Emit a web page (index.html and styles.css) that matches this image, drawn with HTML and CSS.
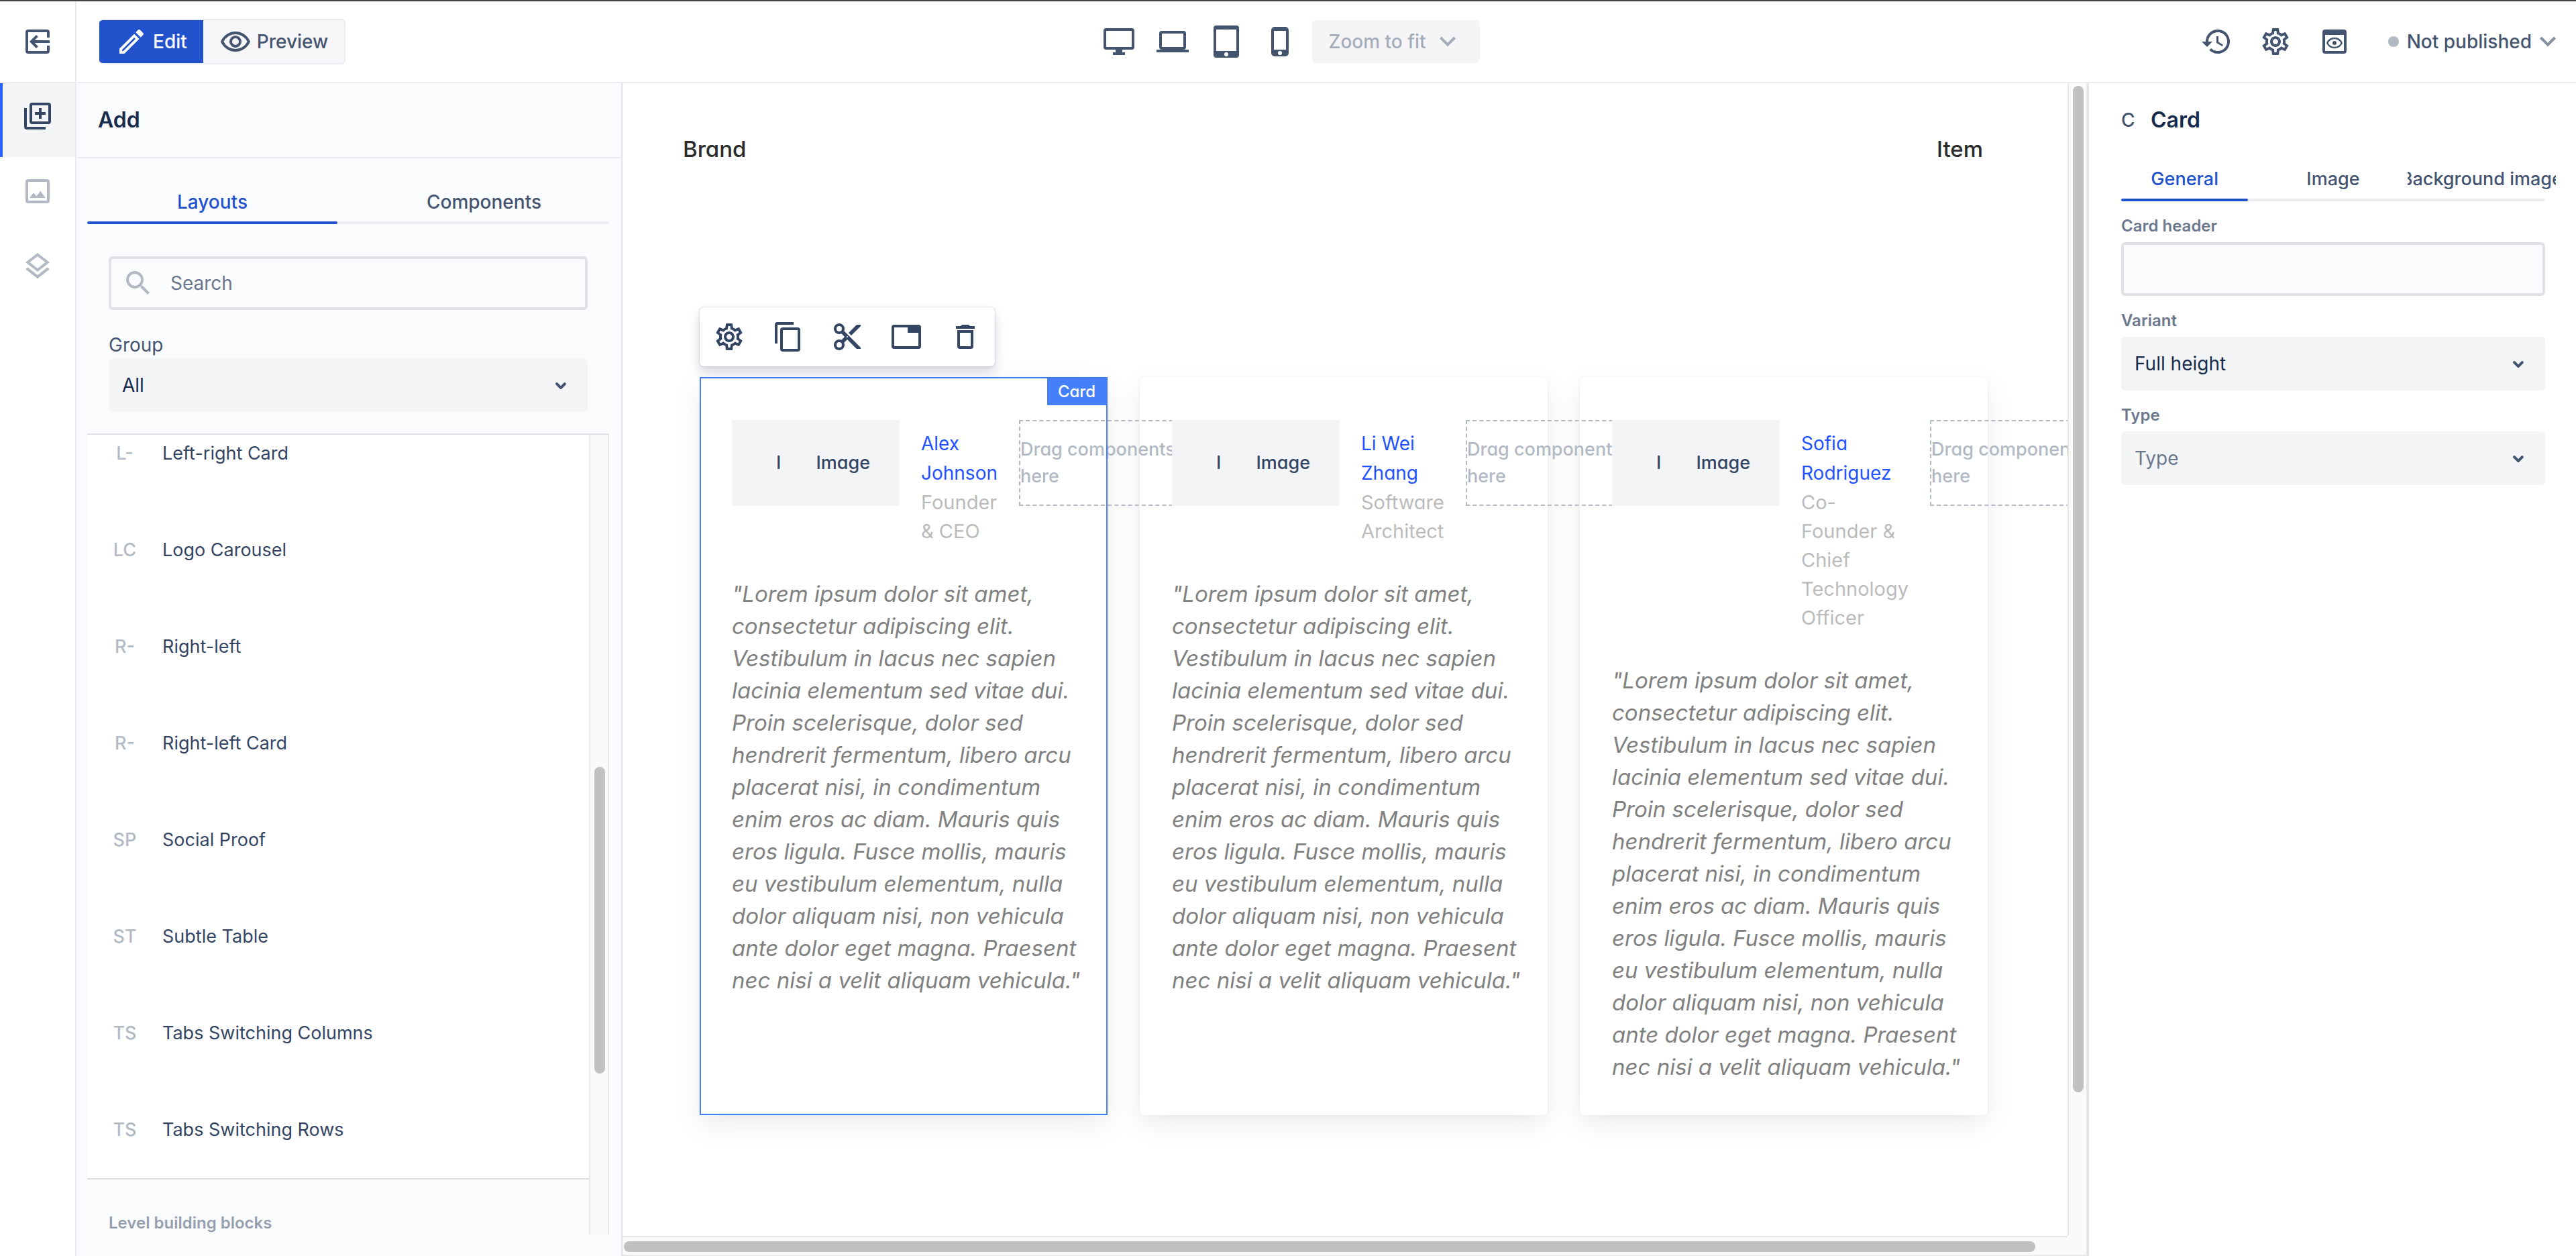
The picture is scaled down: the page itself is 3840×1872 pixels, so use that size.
FILE: index.html
```html
<!DOCTYPE html>
<html lang="en">
<head>
<meta charset="utf-8">
<title>Page editor</title>
<link rel="stylesheet" href="styles.css">
</head>
<body>
<svg class="sprite" aria-hidden="true">
  <symbol id="i-gear" viewBox="0 0 24 24"><path d="M19.43 12.98c.04-.32.07-.64.07-.98s-.03-.66-.07-.98l2.11-1.65c.19-.15.24-.42.12-.64l-2-3.46c-.09-.16-.26-.25-.44-.25-.06 0-.12.01-.17.03l-2.49 1c-.52-.4-1.08-.73-1.69-.98l-.38-2.65C14.46 2.18 14.25 2 14 2h-4c-.25 0-.46.18-.49.42l-.38 2.65c-.61.25-1.17.59-1.69.98l-2.49-1c-.06-.02-.12-.03-.18-.03-.17 0-.34.09-.43.25l-2 3.46c-.13.22-.07.49.12.64l2.11 1.65c-.04.32-.07.65-.07.98s.03.66.07.98l-2.11 1.65c-.19.15-.24.42-.12.64l2 3.46c.09.16.26.25.44.25.06 0 .12-.01.17-.03l2.49-1c.52.4 1.08.73 1.69.98l.38 2.65c.03.24.24.42.49.42h4c.25 0 .46-.18.49-.42l.38-2.65c.61-.25 1.17-.59 1.69-.98l2.49 1c.06.02.12.03.18.03.17 0 .34-.09.43-.25l2-3.46c.12-.22.07-.49-.12-.64l-2.11-1.65zm-1.98-1.71c.04.31.05.52.05.73 0 .21-.02.43-.05.73l-.14 1.13.89.7 1.08.84-.7 1.21-1.27-.51-1.04-.42-.9.68c-.43.32-.84.56-1.25.73l-1.06.43-.16 1.13-.2 1.35h-1.4l-.19-1.35-.16-1.13-1.06-.43c-.43-.18-.83-.41-1.23-.71l-.91-.7-1.06.43-1.27.51-.7-1.21 1.08-.84.89-.7-.14-1.13c-.03-.31-.05-.54-.05-.74s.02-.43.05-.73l.14-1.13-.89-.7-1.08-.84.7-1.21 1.27.51 1.04.42.9-.68c.43-.32.84-.56 1.25-.73l1.06-.43.16-1.13.2-1.35h1.39l.19 1.35.16 1.13 1.06.43c.43.18.83.41 1.23.71l.91.7 1.06-.43 1.27-.51.7 1.21-1.07.85-.89.7.14 1.13zM12 8c-2.210 0-4 1.790-4 4s1.790 4 4 4 4-1.790 4-4-1.790-4-4-4zm0 6c-1.100 0-2-.900-2-2s.900-2 2-2 2 .900 2 2-.900 2-2 2z"/></symbol>
  <symbol id="i-chevron" viewBox="0 0 24 24"><path d="M7.410 8.300 12 12.900l4.590-4.600L18 9.700l-6 6-6-6z"/></symbol>
  <symbol id="i-caret" viewBox="0 0 24 24"><path d="M8.300 10.300a1 1 0 0 1 1.400 0L12 12.600l2.300-2.300a1 1 0 0 1 1.400 1.400l-2.900 2.900a1.100 1.100 0 0 1-1.600 0l-2.900-2.900a1 1 0 0 1 0-1.400z"/></symbol>
</svg>

<header class="topbar">
  <button class="exit" aria-label="Exit editor"><svg class="icon" viewBox="0 0 24 24"><path d="M5 3h14a2 2 0 0 1 2 2v4h-2V5H5v14h14v-4h2v4a2 2 0 0 1-2 2H5a2 2 0 0 1-2-2V5a2 2 0 0 1 2-2zm6 4 1.410 1.410L9.830 11H21v2H9.830l2.580 2.590L11 17l-5-5z" fill-rule="evenodd"/></svg></button>
  <div class="bar">
    <div class="mode">
      <button class="mode-btn on"><svg class="icon" viewBox="0 0 24 24"><path d="M3 17.250V21h3.750L17.810 9.940l-3.750-3.750zM5.920 19H5v-.920l9.060-9.060.920.920zM20.710 7.040a1 1 0 0 0 0-1.410l-2.340-2.340a1 1 0 0 0-1.410 0l-1.830 1.830 3.750 3.750z" fill-rule="evenodd"/></svg>Edit</button>
      <button class="mode-btn"><svg class="icon" viewBox="0 0 24 24"><path d="M12 4.500C7 4.500 2.730 7.610 1 12c1.730 4.390 6 7.500 11 7.500s9.270-3.110 11-7.500c-1.730-4.390-6-7.500-11-7.500zm0 13A9.800 9.800 0 0 1 3.180 12a9.800 9.800 0 0 1 17.640 0A9.800 9.800 0 0 1 12 17.500zm0-10a4.500 4.500 0 1 0 0 9 4.500 4.500 0 0 0 0-9zm0 7a2.500 2.500 0 1 1 0-5 2.500 2.500 0 0 1 0 5z" fill-rule="evenodd"/></svg>Preview</button>
    </div>
    <div class="view">
      <div class="devices">
        <button aria-label="Desktop"><svg class="icon" viewBox="0 0 48 48"><path fill-rule="evenodd" d="M5 4h38a4 4 0 0 1 4 4v24a4 4 0 0 1-4 4H29v4h4v4H15v-4h4v-4H5a4 4 0 0 1-4-4V8a4 4 0 0 1 4-4zm0 4v24h38V8z"/></svg></button>
        <button aria-label="Laptop"><svg class="icon" viewBox="0 0 48 48"><path fill-rule="evenodd" d="M8 8h32a4 4 0 0 1 4 4v20a4 4 0 0 1-4 4h8v4H0v-4h8a4 4 0 0 1-4-4V12a4 4 0 0 1 4-4zm0 4v20h32V12z"/></svg></button>
        <button aria-label="Tablet"><svg class="icon" viewBox="0 0 48 48"><path fill-rule="evenodd" d="M9 0h30a4 4 0 0 1 4 4v40a4 4 0 0 1-4 4H9a4 4 0 0 1-4-4V4a4 4 0 0 1 4-4zm0 6v32h30V6zm15 34a3 3 0 1 0 0 6 3 3 0 0 0 0-6z"/></svg></button>
        <button aria-label="Phone"><svg class="icon" viewBox="0 0 48 48"><path fill-rule="evenodd" d="M16 2h16a5 5 0 0 1 5 5v34a5 5 0 0 1-5 5H16a5 5 0 0 1-5-5V7a5 5 0 0 1 5-5zm-1 6v28h18V8zm9 30a3 3 0 1 0 0 6 3 3 0 0 0 0-6z"/></svg></button>
      </div>
      <button class="zoom" disabled>Zoom to fit<svg class="icon"><use href="#i-chevron"/></svg></button>
    </div>
    <div class="actions">
      <button aria-label="History"><svg class="icon" viewBox="0 0 24 24"><path d="M13 3a9 9 0 0 0-9 9H1l3.890 3.890.070.140L9 12H6a7 7 0 1 1 7 7 6.990 6.990 0 0 1-4.940-2.060l-1.420 1.420A9 9 0 1 0 13 3zm-1 5v5l4.280 2.540.720-1.210-3.500-2.080V8z"/></svg></button>
      <button aria-label="Settings"><svg class="icon"><use href="#i-gear"/></svg></button>
      <button aria-label="Preview page"><svg class="icon" viewBox="0 0 24 24"><path fill-rule="evenodd" d="M5 3h14a2 2 0 0 1 2 2v14a2 2 0 0 1-2 2H5a2 2 0 0 1-2-2V5a2 2 0 0 1 2-2zm0 4v12h14V7zm7 1.900c2.730 0 5.060 1.660 6 4.100-.940 2.440-3.270 4.100-6 4.100S6.940 15.440 6 13c.940-2.440 3.270-4.100 6-4.100zm0 1.200c-2 0-3.800 1.100-4.700 2.900.9 1.800 2.700 2.900 4.700 2.900s3.800-1.100 4.700-2.900c-.9-1.800-2.700-2.900-4.700-2.900zm0 1.400a1.500 1.500 0 1 1 0 3 1.500 1.500 0 0 1 0-3z"/></svg></button>
      <button class="status"><span class="dot"></span>Not published<svg class="icon"><use href="#i-chevron"/></svg></button>
    </div>
  </div>
</header>

<div class="workspace">
  <nav class="rail">
    <button class="rail-btn on" aria-label="Add"><svg class="icon" viewBox="0 0 24 24"><path fill-rule="evenodd" d="M4 6H2v14a2 2 0 0 0 2 2h14v-2H4zm16-4H8a2 2 0 0 0-2 2v12a2 2 0 0 0 2 2h12a2 2 0 0 0 2-2V4a2 2 0 0 0-2-2zm0 14H8V4h12zm-7-2h2v-3h3V9h-3V6h-2v3h-3v2h3z"/></svg></button>
    <button class="rail-btn" aria-label="Media"><svg class="icon" viewBox="0 0 24 24"><path fill-rule="evenodd" d="M19 5v14H5V5zm0-2H5a2 2 0 0 0-2 2v14a2 2 0 0 0 2 2h14a2 2 0 0 0 2-2V5a2 2 0 0 0-2-2zm-4.860 8.860-3 3.870L9 13.140 6 17h12z"/></svg></button>
    <button class="rail-btn" aria-label="Layers"><svg class="icon" viewBox="0 0 24 24"><path fill-rule="evenodd" d="m11.990 18.540-7.370-5.730L3 14.070l9 7 9-7-1.630-1.270zM12 16l7.360-5.730L21 9l-9-7-9 7 1.630 1.270zm0-11.470L17.740 9 12 13.470 6.260 9z"/></svg></button>
  </nav>

  <aside class="library">
    <h1 class="panel-title">Add</h1>
    <div class="library-body">
      <div class="tabs">
        <button class="tab on">Layouts</button>
        <button class="tab">Components</button>
      </div>
      <div class="filters">
        <label class="search">
          <svg class="icon" viewBox="0 0 24 24"><path fill-rule="evenodd" d="M15.500 14h-.790l-.280-.270a6.500 6.500 0 1 0-.7.700l.270.280v.790l5 4.990L20.490 19zm-6 0a4.500 4.500 0 1 1 0-9 4.500 4.500 0 0 1 0 9z"/></svg>
          <input type="search" placeholder="Search" aria-label="Search">
        </label>
        <label class="group-label" for="group">Group</label>
        <div class="select-box"><select id="group"><option>All</option></select><svg class="icon"><use href="#i-caret"/></svg></div>
      </div>
      <div class="scroller">
        <div class="scroll-content">
          <ul class="layouts">
            <li><span class="code">L-</span>Left-right Card</li>
            <li><span class="code">LC</span>Logo Carousel</li>
            <li><span class="code">R-</span>Right-left</li>
            <li><span class="code">R-</span>Right-left Card</li>
            <li><span class="code">SP</span>Social Proof</li>
            <li><span class="code">ST</span>Subtle Table</li>
            <li><span class="code">TS</span>Tabs Switching Columns</li>
            <li><span class="code">TS</span>Tabs Switching Rows</li>
          </ul>
          <h2 class="section">Level building blocks</h2>
        </div>
        <div class="vtrack list-track"><span class="thumb"></span></div>
      </div>
    </div>
  </aside>

  <main class="stage">
    <div class="page">
      <div class="navbar"><a href="#">Brand</a><a href="#">Item</a></div>
      <div class="cards">
        <article class="card">
          <div class="person">
            <div class="image"><span>I</span><span>Image</span></div>
            <p class="who"><span class="name">Alex<br>Johnson</span><br>Founder<br>&amp;&nbsp;CEO</p>
            <div class="drop">Drag components<br>here</div>
          </div>
          <blockquote>"Lorem ipsum dolor sit amet,<br>consectetur adipiscing elit.<br>Vestibulum in lacus nec sapien<br>lacinia elementum sed vitae dui.<br>Proin scelerisque, dolor sed<br>hendrerit fermentum, libero arcu<br>placerat nisi, in condimentum<br>enim eros ac diam. Mauris quis<br>eros ligula. Fusce mollis, mauris<br>eu vestibulum elementum, nulla<br>dolor aliquam nisi, non vehicula<br>ante dolor eget magna. Praesent<br>nec nisi a velit aliquam vehicula."</blockquote>
          <div class="selection"><span class="tag">Card</span></div>
          <div class="toolbar">
            <button aria-label="Settings"><svg class="icon"><use href="#i-gear"/></svg></button>
            <button aria-label="Copy"><svg class="icon" viewBox="0 0 24 24"><path fill-rule="evenodd" d="M16 1H4a2 2 0 0 0-2 2v14h2V3h12zm3 4H8a2 2 0 0 0-2 2v14a2 2 0 0 0 2 2h11a2 2 0 0 0 2-2V7a2 2 0 0 0-2-2zm0 16H8V7h11z"/></svg></button>
            <button aria-label="Cut"><svg class="icon" viewBox="0 0 24 24"><path fill-rule="evenodd" d="M9.640 7.640a4 4 0 1 0-2 2L10 12l-2.360 2.360a4 4 0 1 0 2 2L12 14l7 7h3v-1zM6 8a2 2 0 1 1 0-4 2 2 0 0 1 0 4zm0 12a2 2 0 1 1 0-4 2 2 0 0 1 0 4zm6-7.500a.5.5 0 1 1 0-1 .5.5 0 0 1 0 1zM19 3l-6 6 2 2 7-7V3z"/></svg></button>
            <button aria-label="Save as layout"><svg class="icon" viewBox="0 0 24 24"><path fill-rule="evenodd" d="M21 3H3a2 2 0 0 0-2 2v14a2 2 0 0 0 2 2h18a2 2 0 0 0 2-2V5a2 2 0 0 0-2-2zm0 16H3V5h10v4h8z"/></svg></button>
            <button aria-label="Delete"><svg class="icon" viewBox="0 0 24 24"><path fill-rule="evenodd" d="M6 19a2 2 0 0 0 2 2h8a2 2 0 0 0 2-2V7H6zM8 9h8v10H8zm7.500-5-1-1h-5l-1 1H5v2h14V4z"/></svg></button>
          </div>
        </article>
        <article class="card">
          <div class="person">
            <div class="image"><span>I</span><span>Image</span></div>
            <p class="who"><span class="name">Li&nbsp;Wei<br>Zhang</span><br>Software<br>Architect</p>
            <div class="drop">Drag components<br>here</div>
          </div>
          <blockquote>"Lorem ipsum dolor sit amet,<br>consectetur adipiscing elit.<br>Vestibulum in lacus nec sapien<br>lacinia elementum sed vitae dui.<br>Proin scelerisque, dolor sed<br>hendrerit fermentum, libero arcu<br>placerat nisi, in condimentum<br>enim eros ac diam. Mauris quis<br>eros ligula. Fusce mollis, mauris<br>eu vestibulum elementum, nulla<br>dolor aliquam nisi, non vehicula<br>ante dolor eget magna. Praesent<br>nec nisi a velit aliquam vehicula."</blockquote>
        </article>
        <article class="card">
          <div class="person">
            <div class="image"><span>I</span><span>Image</span></div>
            <p class="who"><span class="name">Sofia<br>Rodriguez</span><br>Co-<br>Founder&nbsp;&amp;<br>Chief<br>Technology<br>Officer</p>
            <div class="drop">Drag components<br>here</div>
          </div>
          <blockquote>"Lorem ipsum dolor sit amet,<br>consectetur adipiscing elit.<br>Vestibulum in lacus nec sapien<br>lacinia elementum sed vitae dui.<br>Proin scelerisque, dolor sed<br>hendrerit fermentum, libero arcu<br>placerat nisi, in condimentum<br>enim eros ac diam. Mauris quis<br>eros ligula. Fusce mollis, mauris<br>eu vestibulum elementum, nulla<br>dolor aliquam nisi, non vehicula<br>ante dolor eget magna. Praesent<br>nec nisi a velit aliquam vehicula."</blockquote>
        </article>
      </div>
    </div>
    <div class="vtrack page-track"><span class="thumb"></span></div>
    <div class="htrack"><span class="thumb"></span></div>
    <div class="corner"></div>
  </main>

  <aside class="inspector">
    <h2 class="inspector-title"><span class="code">C</span>Card</h2>
    <div class="tabs">
      <button class="tab on">General</button>
      <button class="tab">Image</button>
      <button class="tab">Background image</button>
    </div>
    <div class="field">
      <label for="card-header">Card header</label>
      <input id="card-header" type="text">
    </div>
    <div class="field">
      <label for="variant">Variant</label>
      <div class="select-box"><select id="variant"><option>Full height</option></select><svg class="icon"><use href="#i-caret"/></svg></div>
    </div>
    <div class="field">
      <label for="type">Type</label>
      <div class="select-box empty"><select id="type"><option>Type</option></select><svg class="icon"><use href="#i-caret"/></svg></div>
    </div>
  </aside>
</div>
</body>
</html>
```
FILE: styles.css
```css
:root {
  --ink: #172b4d;
  --text: #344563;
  --slate: #44546f;
  --muted: #6b778c;
  --faint: #b3b9c4;
  --line: #ebecf0;
  --edge: #dfe1e6;
  --fill: #f3f4f6;
  --panel: #fafbfd;
  --blue: #2251cc;
}

* { box-sizing: border-box; }

body {
  margin: 0;
  height: 100vh;
  display: flex;
  flex-direction: column;
  overflow: hidden;
  border-top: 2px solid #414141;
  background: #fff;
  color: var(--text);
  font: 400 28px/40px Inter, "Liberation Sans", sans-serif;
}

button, input, select { font: inherit; color: inherit; }
button { margin: 0; padding: 0; border: 0; background: none; }
h1, h2, p, ul, blockquote { margin: 0; padding: 0; }
.sprite { display: none; }
.icon { display: block; flex: none; width: 48px; height: 48px; fill: currentColor; }

/* Top bar */
.topbar {
  flex: none;
  display: flex;
  height: 122px;
  border-bottom: 2px solid var(--line);
  color: var(--slate);
  font-weight: 500;
}
.exit {
  display: flex;
  align-items: center;
  justify-content: center;
  width: 114px;
  border-right: 2px solid var(--line);
}
.bar {
  flex: 1;
  display: grid;
  grid-template-columns: 1fr auto 1fr;
  align-items: center;
  padding: 0 18px 0 34px;
}
.mode {
  justify-self: start;
  display: flex;
  border: 2px solid var(--line);
  border-left: 0;
  border-radius: 6px;
  background: #f6f6f8;
  overflow: hidden;
}
.mode-btn {
  display: flex;
  align-items: center;
  height: 64px;
  padding: 0 24px;
  gap: 8px;
}
.mode-btn.on { background: var(--blue); color: #fff; }
.view { display: flex; align-items: center; gap: 24px; padding-right: 120px; }
.devices { display: flex; gap: 32px; }
.zoom {
  display: flex;
  align-items: center;
  gap: 8px;
  height: 64px;
  padding: 0 24px;
  border-radius: 6px;
  background: #f5f5f8;
  color: #a5adba;
}
.actions { justify-self: end; display: flex; align-items: center; gap: 40px; }
.status { display: flex; align-items: center; margin-left: 16px; }
.status .icon { color: #8590a2; }
.dot { width: 16px; height: 16px; margin-right: 12px; border-radius: 50%; background: var(--faint); }

/* Workspace columns */
.workspace { flex: 1; display: flex; min-height: 0; }
.rail {
  flex: none;
  width: 114px;
  display: flex;
  flex-direction: column;
  gap: 2px;
  border-right: 2px solid var(--line);
  color: var(--faint);
}
.rail-btn {
  display: flex;
  justify-content: center;
  height: 110px;
  padding-top: 25px;
  border: solid transparent;
  border-width: 0 4px;
}
.rail-btn.on { background: var(--fill); border-left-color: #2962ff; color: var(--text); }

.library {
  flex: none;
  width: 814px;
  display: flex;
  flex-direction: column;
  border-right: 2px solid var(--edge);
  background: var(--panel);
}
.panel-title {
  height: 112px;
  padding: 35px 32px;
  border-bottom: 2px solid var(--line);
  color: var(--ink);
  font-size: 32px;
  font-weight: 600;
}
.library-body {
  flex: 1;
  display: flex;
  flex-direction: column;
  min-height: 0;
  padding: 32px 18px 32px 16px;
}

/* Tabs */
.tabs { position: relative; display: flex; font-weight: 500; color: var(--slate); }
.tabs::after {
  content: "";
  position: absolute;
  inset: auto 0 0;
  height: 4px;
  border-radius: 2px;
  background: var(--line);
}
.tab {
  position: relative;
  flex: 1 1 0;
  display: flex;
  justify-content: center;
  height: 66px;
  margin: 0 -16px;
  padding: 13px 0;
  overflow: hidden;
  white-space: nowrap;
}
.tab + .tab { margin-left: 16px; }
.tab.on { color: var(--blue); }
.tab.on::after {
  content: "";
  position: absolute;
  z-index: 1;
  inset: auto 16px 0;
  height: 4px;
  border-radius: 2px;
  background: var(--blue);
}

/* Library filters */
.filters { padding: 48px 32px 32px; }
.search {
  display: flex;
  align-items: center;
  gap: 24px;
  height: 80px;
  padding: 0 16px;
  border: 4px solid var(--edge);
  border-radius: 6px;
  color: var(--faint);
}
.search input { flex: 1; min-width: 0; padding: 0; border: 0; outline: 0; background: none; }
input::placeholder { color: var(--muted); opacity: 1; }
.group-label { display: block; padding: 32px 0 0; color: var(--slate); }
.select-box { position: relative; }
.select-box select {
  display: block;
  width: 100%;
  height: 80px;
  padding: 0 20px;
  border: 0;
  border-radius: 6px;
  background: var(--fill);
  color: var(--ink);
  appearance: none;
}
.select-box.empty select { color: var(--muted); }
.select-box .icon { position: absolute; right: 16px; top: 16px; color: var(--slate); }

.scroller { flex: 1; display: flex; min-height: 0; border-top: 2px solid var(--edge); }
.scroll-content {
  flex: 1;
  display: flex;
  flex-direction: column;
  justify-content: flex-end;
  overflow: hidden;
}
.layouts { flex: none; list-style: none; background: #fff; border-bottom: 2px solid var(--edge); }
.layouts li { display: flex; align-items: center; height: 144px; font-size: 27px; }
.layouts .code { width: 112px; text-align: center; font-weight: 500; color: var(--faint); }
.section { flex: none; padding: 45px 32px 0; height: 82px; font-size: 24px; line-height: 40px; font-weight: 600; color: #97a0af; }

/* Scroll tracks */
.vtrack { flex: none; width: 30px; padding: 0 6px; border: solid #e8e8e8; border-width: 0 2px; background: #fafafa; }
.thumb { display: block; border-radius: 8px; background: #c1c1c1; }
.list-track { display: flex; flex-direction: column; justify-content: flex-end; padding-bottom: 240px; }
.vtrack .thumb { width: 16px; }
.list-track .thumb { height: 48%; }

/* Stage */
.stage {
  flex: 1;
  min-width: 0;
  display: grid;
  grid-template: minmax(0, 1fr) 30px / minmax(0, 1fr) 30px;
}
.page { overflow: hidden; font-feature-settings: "cv11"; }
.page-track { padding: 4px 6px 214px; }
.page-track .thumb { height: 100%; }
.htrack { padding: 6px 48px 6px 2px; border: solid #e8e8e8; border-width: 2px 0; background: #fafafa; }
.htrack .thumb { height: 16px; }
.corner { border: solid #e8e8e8; border-width: 0 2px 2px 0; background: #fafafa; }
.navbar {
  display: flex;
  justify-content: space-between;
  padding: 78px 126px 0 90px;
  font-size: 33px;
  font-weight: 500;
}
.navbar a { color: #2b2b2b; text-decoration: none; }
.cards {
  display: grid;
  grid-template-columns: repeat(3, minmax(0, 1fr));
  gap: 48px;
  padding: 320px 119px 0 115px;
}
.card {
  position: relative;
  padding: 64px 48px 48px;
  border-radius: 8px;
  background: #fff;
  box-shadow: 0 14px 40px rgba(0, 0, 0, .08), 0 0 4px rgba(0, 0, 0, .05);
}
.card:first-child { border-radius: 0; }
.person { display: flex; align-items: flex-start; gap: 32px; }
.image {
  position: relative;
  z-index: 2;
  flex: none;
  display: flex;
  align-items: center;
  justify-content: flex-end;
  gap: 52px;
  width: 250px;
  height: 128px;
  padding-right: 44px;
  background: var(--fill);
  font-size: 27px;
  font-weight: 500;
}
.who { flex: none; padding-top: 13px; font-size: 29px; line-height: 43px; color: #bbb; }
.name { font-size: 28px; color: #2251ff; }
.drop {
  position: relative;
  z-index: 1;
  flex: none;
  width: 250px;
  height: 128px;
  padding-top: 22px;
  border: 2px dashed var(--faint);
  color: var(--faint);
  font-size: 27px;
  font-weight: 500;
  white-space: nowrap;
}
blockquote { padding-top: 48px; font-size: 33px; line-height: 48px; font-style: italic; color: #808080; white-space: nowrap; }
.selection { position: absolute; z-index: 3; inset: 0; border: 2px solid #4680f8; }
.tag {
  position: absolute;
  top: 0;
  right: 0;
  padding: 0 16px;
  background: #4680f8;
  color: #fff;
  font-size: 24px;
  font-weight: 500;
}
.toolbar {
  position: absolute;
  left: 0;
  bottom: calc(100% + 16px);
  display: flex;
  border-radius: 6px;
  background: #fff;
  box-shadow: 0 8px 16px rgba(9, 30, 66, .18), 0 0 2px rgba(9, 30, 66, .3);
}
.toolbar button { padding: 20px; color: var(--text); }

/* Inspector */
.inspector {
  flex: none;
  width: 728px;
  padding: 35px 46px 0 48px;
  border-left: 2px solid var(--edge);
  overflow: hidden;
}
.inspector-title { display: flex; font-size: 32px; font-weight: 600; color: var(--ink); }
.inspector-title .code { width: 44px; font-size: 28px; font-weight: 500; color: var(--slate); }
.inspector .tabs { margin-top: 35px; font-size: 27px; }
.field { padding-top: 21px; }
.field label { display: block; padding-bottom: 8px; font-size: 24px; line-height: 32px; font-weight: 600; color: var(--muted); }
.field input {
  display: block;
  width: 100%;
  height: 80px;
  padding: 0 16px;
  border: 4px solid var(--edge);
  border-radius: 6px;
  background: var(--panel);
}
```
